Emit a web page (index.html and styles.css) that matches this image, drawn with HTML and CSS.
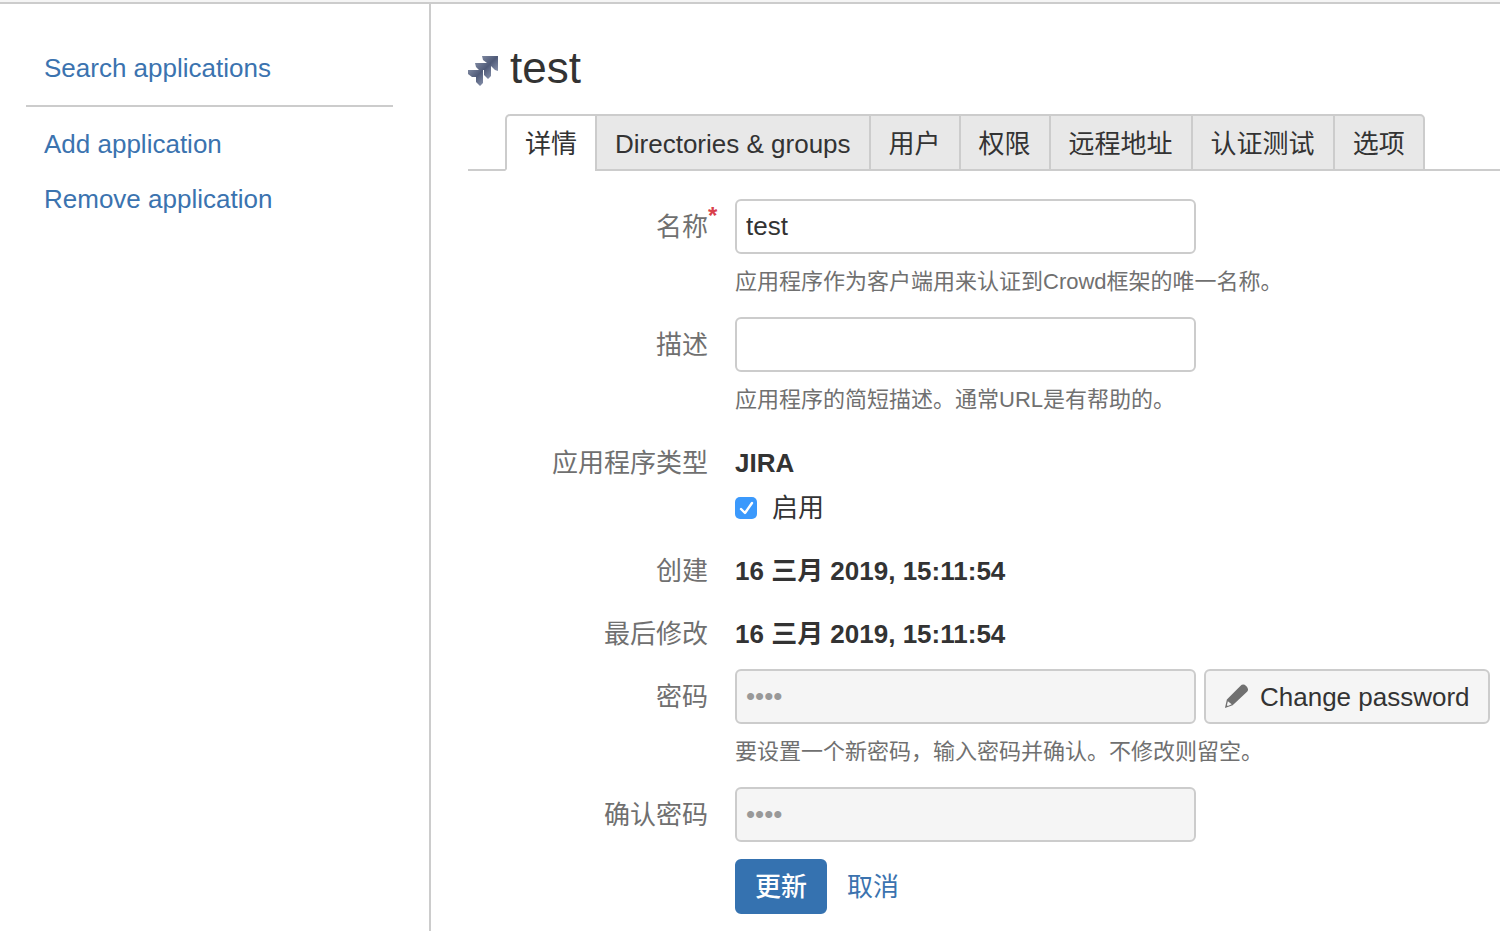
FILE: index.html
```html
<!DOCTYPE html>
<html lang="zh-CN">

<head>
    <meta charset="UTF-8">
    <meta name="viewport" content="width=device-width, initial-scale=1.0">
    <title>test</title>
    <link rel="stylesheet" href="styles.css">
</head>

<body>
    <div class="page">
        <aside class="sidebar">
            <ul class="nav-group">
                <li><a href="#">Search applications</a></li>
            </ul>
            <ul class="nav-group">
                <li><a href="#">Add application</a></li>
                <li><a href="#">Remove application</a></li>
            </ul>
        </aside>
        <main class="content">
            <h1 class="title">
                <svg class="app-icon" viewBox="0 0 30 30" aria-hidden="true">
                    <defs>
                        <linearGradient id="arrow" x1="0" y1="0" x2="1" y2="1">
                            <stop offset="0" stop-color="#7d879f" />
                            <stop offset="0.5" stop-color="#4f5a78" />
                            <stop offset="1" stop-color="#8993ad" />
                        </linearGradient>
                    </defs>
                    <path fill="url(#arrow)" d="M14 0H30V15L27 14L23 10V7H19L15 4Z" />
                    <path fill="url(#arrow)" d="M7 7H23V20L20 23L16 19V14H11L8 11Z" />
                    <path fill="url(#arrow)" d="M0 14H15V27L12 30L8 26V21H4L0 18Z" />
                </svg>
                test
            </h1>
            <nav class="tabs">
                <a class="tab active" href="#">详情</a>
                <a class="tab" href="#">Directories &amp; groups</a>
                <a class="tab" href="#">用户</a>
                <a class="tab" href="#">权限</a>
                <a class="tab" href="#">远程地址</a>
                <a class="tab" href="#">认证测试</a>
                <a class="tab" href="#">选项</a>
            </nav>
            <form class="form">
                <div class="field">
                    <label class="label" for="name">名称<span class="required">*</span></label>
                    <div class="control">
                        <input class="text" id="name" type="text" value="test">
                        <p class="hint">应用程序作为客户端用来认证到Crowd框架的唯一名称。</p>
                    </div>
                </div>
                <div class="field">
                    <label class="label" for="description">描述</label>
                    <div class="control">
                        <input class="text" id="description" type="text">
                        <p class="hint">应用程序的简短描述。通常URL是有帮助的。</p>
                    </div>
                </div>
                <div class="field plain">
                    <span class="label">应用程序类型</span>
                    <div class="control">
                        <strong class="value">JIRA</strong>
                        <label class="check"><input type="checkbox" checked>启用</label>
                    </div>
                </div>
                <div class="field plain">
                    <span class="label">创建</span>
                    <strong class="value">16 三月 2019, 15:11:54</strong>
                </div>
                <div class="field plain">
                    <span class="label">最后修改</span>
                    <strong class="value">16 三月 2019, 15:11:54</strong>
                </div>
                <div class="field">
                    <label class="label" for="password">密码</label>
                    <div class="control">
                        <div class="inline">
                            <input class="text" id="password" type="password" value="1234" disabled>
                            <button class="btn" type="button">
                                <svg class="pencil" viewBox="0 0 26 26" aria-hidden="true">
                                    <path fill="#707070" d="M17 2Q20 -1 23 2L24 3Q26 6 24 8L9 22L1 25L3 16Z" />
                                    <path fill="#f5f5f5" d="M4 18L8 21L4 23L3 22Z" />
                                </svg>
                                Change password
                            </button>
                        </div>
                        <p class="hint">要设置一个新密码，输入密码并确认。不修改则留空。</p>
                    </div>
                </div>
                <div class="field">
                    <label class="label" for="confirm">确认密码</label>
                    <div class="control">
                        <input class="text" id="confirm" type="password" value="1234" disabled>
                    </div>
                </div>
                <div class="actions">
                    <button class="btn primary" type="submit">更新</button>
                    <a class="cancel" href="#">取消</a>
                </div>
            </form>
        </main>
    </div>
</body>

</html>
```
FILE: styles.css
```css
* {
    margin: 0;
    padding: 0;
    box-sizing: border-box;
}

body {
    font-family: "Liberation Sans", "Noto Sans CJK SC", sans-serif;
    font-size: 26px;
    line-height: 28px;
    color: #333;
    background-color: #f5f5f5;
    padding-top: 2px;
}

a {
    color: #3b73af;
    text-decoration: none;
}

.page {
    display: flex;
    min-height: calc(100vh - 2px);
    border-top: 2px solid #ccc;
    background-color: #fff;
}

/* 左侧导航 */
.sidebar {
    flex: 0 0 431px;
    padding: 37px 36px 0 26px;
    border-right: 2px solid #ccc;
}

.nav-group {
    list-style: none;
}

.nav-group + .nav-group {
    margin-top: 9px;
    padding-top: 10px;
    border-top: 2px solid #ccc;
}

.nav-group a {
    display: block;
    padding: 14px 18px;
    line-height: 27px;
}

/* 右侧内容 */
.content {
    flex: 1;
    min-width: 0;
    padding-left: 37px;
}

.title {
    display: flex;
    align-items: center;
    gap: 12px;
    padding-top: 36px;
    font-size: 44px;
    font-weight: normal;
    line-height: 56px;
}

.app-icon {
    width: 30px;
    height: 30px;
    margin-top: 6px;
}

.tabs {
    display: flex;
    margin-top: 18px;
    padding-left: 37px;
    border-bottom: 2px solid #ccc;
}

.tab {
    flex: none;
    margin-bottom: -2px;
    padding: 15px 18px 12px;
    border: 2px solid #ccc;
    background-color: #e8e8e8;
    color: #333;
    line-height: 26px;
}

.tab + .tab {
    margin-left: -2px;
}

.tab:first-child {
    border-top-left-radius: 5px;
}

.tab:last-child {
    border-top-right-radius: 5px;
}

.tab.active {
    border-bottom-color: #fff;
    background-color: #fff;
}

.form {
    padding-top: 28px;
}

.field {
    display: flex;
    gap: 27px;
    margin-bottom: 21px;
}

.field.plain {
    padding-top: 14px;
}

.label {
    position: relative;
    flex: 0 0 240px;
    text-align: right;
    line-height: 57px;
    color: #707070;
}

.field:not(.plain) .label {
    height: 55px;
}

.plain .label {
    line-height: 28px;
}

.required {
    position: absolute;
    left: 100%;
    top: -12px;
    font-size: 24px;
    font-weight: bold;
    color: #d9404c;
}

.value {
    display: block;
}

.text {
    display: block;
    width: 461px;
    height: 55px;
    padding: 0 9px;
    border: 2px solid #ccc;
    border-radius: 6px;
    background-color: #fff;
    font: inherit;
    color: #333;
}

.text:disabled {
    background-color: #f5f5f5;
    color: #999;
}

.hint {
    margin-top: 14px;
    font-size: 22px;
    color: #707070;
}

.check {
    display: flex;
    align-items: center;
    gap: 15px;
    margin-top: 17px;
}

.check input {
    appearance: none;
    width: 22px;
    height: 22px;
    border-radius: 5px;
    background: #3b99fc url("data:image/svg+xml,%3Csvg xmlns='http://www.w3.org/2000/svg' viewBox='0 0 22 22'%3E%3Cpath d='M6 12L10 16L17 6' fill='none' stroke='white' stroke-width='2.4' stroke-linecap='round' stroke-linejoin='round'/%3E%3C/svg%3E");
}

.inline {
    display: flex;
    gap: 8px;
}

.btn {
    display: flex;
    align-items: center;
    gap: 11px;
    height: 55px;
    padding: 0 18px;
    border: 2px solid #ccc;
    border-radius: 6px;
    background-color: #f5f5f5;
    font: inherit;
    color: #333;
    white-space: nowrap;
    cursor: pointer;
}

.btn.primary {
    border-color: #3572b0;
    background-color: #3572b0;
    color: #fff;
    font-weight: 500;
}

.pencil {
    width: 25px;
    height: 25px;
}

.actions {
    display: flex;
    align-items: center;
    gap: 20px;
    margin-top: -4px;
    padding-left: 267px;
}
```
